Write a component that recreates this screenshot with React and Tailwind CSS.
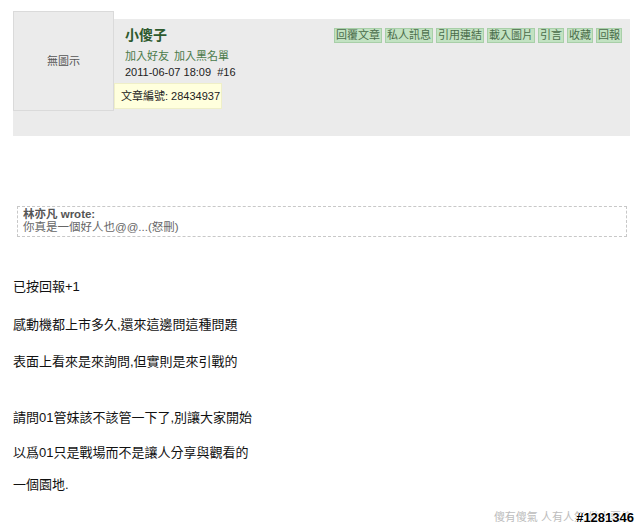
import React from 'react';

const font = { fontFamily: '"Liberation Sans", Arial, "Noto Sans CJK TC", sans-serif' };

const actions = ['回覆文章', '私人訊息', '引用連結', '載入圖片', '引言', '收藏', '回報'];

const lines = [
  { text: '已按回報+1', mt: 'mt-[41px]' },
  { text: '感動機都上市多久,還來這邊問這種問題', mt: 'mt-[20px]' },
  { text: '表面上看來是來詢問,但實則是來引戰的', mt: 'mt-[19px]' },
  { text: '請問01管妹該不該管一下了,別讓大家開始', mt: 'mt-[38px]' },
  { text: '以爲01只是戰場而不是讓人分享與觀看的', mt: 'mt-[17px]' },
  { text: '一個園地.', mt: 'mt-[14px]' },
];

const App = () => {
  return (
    <div className="w-[640px] h-[529px] overflow-hidden bg-white text-[#222]" style={font}>
      {/* post header */}
      <div className="relative mt-[19px] ml-[13px] mr-[10px] h-[117px] bg-[#ebebeb] flex">
        <div className="-mt-[8px] w-[101px] h-[100px] shrink-0 border border-[#dadada] bg-[#ebebeb] flex items-center justify-center text-[11px] text-[#555]">
          無圖示
        </div>
        <div className="pl-[11px] pt-[7px] flex flex-col">
          <div className="text-[14px] font-bold leading-[18px] text-[#2e5a2e]">小傻子</div>
          <div className="mt-[5px] flex gap-[5px] text-[11px] leading-[14px] text-[#4a7a4a]">
            <span>加入好友</span>
            <span>加入黑名單</span>
          </div>
          <div className="mt-[2px] text-[11px] leading-[14px] text-[#222]">2011-06-07 18:09 &nbsp;#16</div>
        </div>
        <div className="ml-auto mr-[8px] mt-[9px] flex gap-[3px] self-start">
          {actions.map((a) => (
            <span
              key={a}
              className="border border-[#a8cfa8] bg-[#c2e2c2] px-[1px] text-[11px] leading-[13px] text-[#4a6c4a]"
            >
              {a}
            </span>
          ))}
        </div>
        <div className="absolute left-[101px] top-[64px] w-[108px] h-[26px] border border-[#efefc8] bg-[#ffffdd] flex items-center pl-[6px] text-[11px] text-[#222]">
          文章編號: 28434937
        </div>
      </div>

      {/* quote */}
      <div className="mt-[70px] ml-[17px] mr-[13px] h-[31px] border border-dashed border-[#c8c8c8] px-[5px] pt-[1px] text-[11.5px] leading-[13px] text-[#666]">
        <div>
          <span className="font-bold text-[#555]">林亦凡 wrote:</span>
        </div>
        <div>你真是一個好人也@@...(怒刪)</div>
      </div>

      {/* body */}
      <div className="ml-[13px] text-[13px] leading-[18px] text-[#111]">
        {lines.map((l) => (
          <div key={l.text} className={l.mt}>
            {l.text}
          </div>
        ))}
      </div>

      {/* footer */}
      <div className="relative mt-[16px] h-[20px] flex justify-end pr-[8px]">
        <span className="text-[11px] leading-[14px] text-[#bdbdbd]">傻有傻氣 人有人氣 做人要傻</span>
        <span
          className="absolute right-[6px] top-[1px] text-[13px] font-bold leading-[14px] text-black"
          style={{ textShadow: '1px 0 #fff, -1px 0 #fff, 0 1px #fff, 0 -1px #fff' }}
        >
          #1281346
        </span>
      </div>
    </div>
  );
};

export default App;
